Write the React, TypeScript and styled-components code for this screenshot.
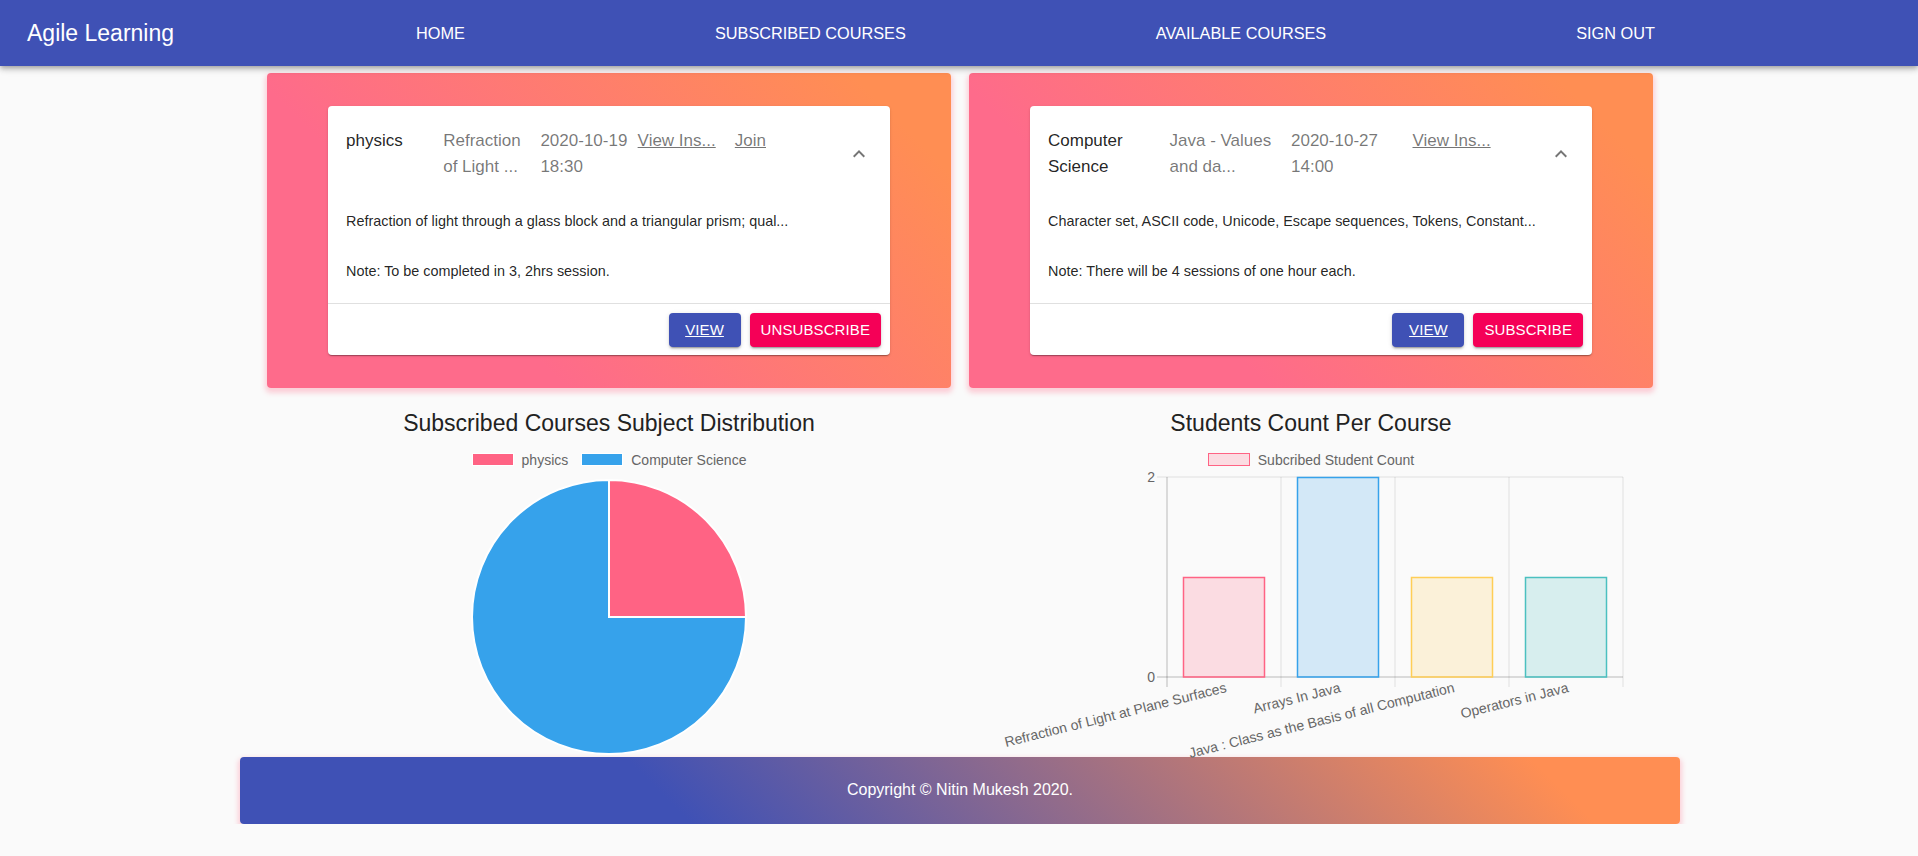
import React from "react";
import styled, { createGlobalStyle } from "styled-components";

const GlobalStyle = createGlobalStyle`
  html, body {
    margin: 0;
    padding: 0;
    background: #fafafa;
    font-family: "Liberation Sans", Arial, Helvetica, sans-serif;
  }
  * {
    box-sizing: border-box;
  }
`;

const AppBar = styled.header`
  height: 66px;
  background: #3f51b5;
  color: #fff;
  display: flex;
  align-items: center;
  padding: 0 27px;
  box-shadow:
    0px 2px 4px -1px rgba(0, 0, 0, 0.2),
    0px 4px 5px 0px rgba(0, 0, 0, 0.14),
    0px 1px 10px 0px rgba(0, 0, 0, 0.12);
  position: relative;
  z-index: 2;
`;

const Brand = styled.div`
  font-size: 23px;
  line-height: 1;
  white-space: nowrap;
`;

const Nav = styled.nav`
  display: flex;
  align-items: center;
  gap: 250px;
  margin-left: 242px;
`;

const NavLink = styled.a`
  color: #fff;
  font-size: 16.3px;
  text-transform: uppercase;
  text-decoration: none;
  white-space: nowrap;
  cursor: pointer;
`;

const Main = styled.main`
  width: 1386px;
  margin: 7px 0 0 calc(50% - 692px);
`;

const CardRow = styled.div`
  display: grid;
  grid-template-columns: 684px 684px;
  gap: 18px;
`;

const GradientPanel = styled.section`
  background: linear-gradient(45deg, #fe6b8b 30%, #ff8e53 90%);
  border-radius: 4px;
  box-shadow: 0 3px 5px 2px rgba(255, 105, 135, 0.3);
  padding: 33px 61px;
`;

const CourseCard = styled.div`
  background: #fff;
  border-radius: 4px;
  box-shadow:
    0px 2px 1px -1px rgba(0, 0, 0, 0.2),
    0px 1px 1px 0px rgba(0, 0, 0, 0.14),
    0px 1px 3px 0px rgba(0, 0, 0, 0.12);
`;

const Summary = styled.div`
  display: flex;
  align-items: center;
  padding: 22px 19px 0 18px;
`;

const SummaryCols = styled.div`
  flex: 1;
  display: flex;
  min-width: 0;
`;

const SummaryCol = styled.div<{ $primary?: boolean }>`
  flex: 1 1 0;
  min-width: 0;
  padding-right: 8px;
  font-size: 17px;
  line-height: 25.5px;
  color: ${(p) => (p.$primary ? "rgba(0, 0, 0, 0.87)" : "rgba(0, 0, 0, 0.54)")};
`;

const SummaryLink = styled.a`
  color: rgba(0, 0, 0, 0.54);
  text-decoration: underline;
  cursor: pointer;
`;

const ExpandIcon = styled.svg`
  width: 24px;
  height: 24px;
  margin-left: 15px;
  flex: none;
  fill: rgba(0, 0, 0, 0.54);
`;

const Details = styled.div`
  padding: 32px 18px 21px;
  color: rgba(0, 0, 0, 0.87);
  font-size: 14.4px;
  line-height: 20.6px;
`;

const DetailLine = styled.p`
  margin: 0;
  & + & {
    margin-top: 29.4px;
  }
`;

const Divider = styled.hr`
  margin: 0;
  border: none;
  height: 1px;
  background: rgba(0, 0, 0, 0.12);
`;

const Actions = styled.div`
  display: flex;
  justify-content: flex-end;
  gap: 9px;
  padding: 9px 9px 8px;
`;

const ActionButton = styled.button<{ $variant: "primary" | "secondary" }>`
  height: 34px;
  min-width: 72px;
  padding: 0 11px;
  border: none;
  border-radius: 4px;
  font-family: inherit;
  font-size: 15px;
  letter-spacing: 0.1px;
  text-transform: uppercase;
  color: #fff;
  cursor: pointer;
  background: ${(p) => (p.$variant === "primary" ? "#3f51b5" : "#f50057")};
  text-decoration: ${(p) => (p.$variant === "primary" ? "underline" : "none")};
  box-shadow:
    0px 3px 1px -2px rgba(0, 0, 0, 0.2),
    0px 2px 2px 0px rgba(0, 0, 0, 0.14),
    0px 1px 5px 0px rgba(0, 0, 0, 0.12);
`;

const ChartRow = styled.div`
  display: grid;
  grid-template-columns: 684px 684px;
  gap: 18px;
  padding-top: 21px;
`;

const ChartColumn = styled.div`
  display: flex;
  flex-direction: column;
  align-items: center;
`;

const ChartTitle = styled.h2`
  margin: 0;
  font-size: 23px;
  line-height: 28px;
  font-weight: 400;
  color: #222;
`;

const Legend = styled.div`
  display: flex;
  align-items: center;
  gap: 13px;
  height: 16px;
  margin-top: 15px;
`;

const LegendItem = styled.div`
  display: flex;
  align-items: center;
  gap: 8px;
  font-size: 14px;
  color: #666;
  white-space: nowrap;
`;

const LegendSwatch = styled.span<{ $fill: string; $stroke: string }>`
  width: 42px;
  height: 13px;
  background: ${(p) => p.$fill};
  border: 1.5px solid ${(p) => p.$stroke};
`;

const ChartSvg = styled.svg`
  display: block;
  margin-top: 2px;
  overflow: visible;
  font-family: "Liberation Sans", Arial, sans-serif;
`;

const Footer = styled.footer`
  width: 1440px;
  height: 67px;
  margin-left: calc(50% - 719px);
  display: flex;
  align-items: center;
  justify-content: center;
  color: #fff;
  font-size: 16px;
  border-radius: 4px;
  background: linear-gradient(45deg, #3f51b5 30%, #ff8e53 90%);
  box-shadow: 0 3px 5px 2px rgba(255, 105, 135, 0.3);
`;

type Course = {
  subject: string;
  topic: string;
  date: string;
  links: string[];
  description: string;
  note: string;
  action: string;
};

const courses: Course[] = [
  {
    subject: "physics",
    topic: "Refraction of Light ...",
    date: "2020-10-19 18:30",
    links: ["View Ins...", "Join"],
    description:
      "Refraction of light through a glass block and a triangular prism; qual...",
    note: "Note: To be completed in 3, 2hrs session.",
    action: "Unsubscribe",
  },
  {
    subject: "Computer Science",
    topic: "Java - Values and da...",
    date: "2020-10-27 14:00",
    links: ["View Ins..."],
    description:
      "Character set, ASCII code, Unicode, Escape sequences, Tokens, Constant...",
    note: "Note: There will be 4 sessions of one hour each.",
    action: "Subscribe",
  },
];

const bars = [
  { label: "Refraction of Light at Plane Surfaces", value: 1, rgb: "255, 99, 132" },
  { label: "Arrays In Java", value: 2, rgb: "54, 162, 235" },
  { label: "Java : Class as the Basis of all Computation", value: 1, rgb: "255, 206, 86" },
  { label: "Operators in Java", value: 1, rgb: "75, 192, 192" },
];

const CourseItem: React.FC<{ course: Course }> = ({ course }) => (
  <GradientPanel>
    <CourseCard>
      <Summary>
        <SummaryCols>
          <SummaryCol $primary>{course.subject}</SummaryCol>
          <SummaryCol>{course.topic}</SummaryCol>
          <SummaryCol>{course.date}</SummaryCol>
          {course.links.map((l) => (
            <SummaryCol key={l}>
              <SummaryLink>{l}</SummaryLink>
            </SummaryCol>
          ))}
        </SummaryCols>
        <ExpandIcon viewBox="0 0 24 24">
          <path d="M12 8l-6 6 1.41 1.41L12 10.83l4.59 4.58L18 14z" />
        </ExpandIcon>
      </Summary>
      <Details>
        <DetailLine>{course.description}</DetailLine>
        <DetailLine>{course.note}</DetailLine>
      </Details>
      <Divider />
      <Actions>
        <ActionButton $variant="primary">View</ActionButton>
        <ActionButton $variant="secondary">{course.action}</ActionButton>
      </Actions>
    </CourseCard>
  </GradientPanel>
);

const PieChart: React.FC = () => {
  const cx = 342;
  const cy = 147;
  const r = 137;
  return (
    <ChartSvg width={684} height={287} viewBox="0 0 684 287">
      <path
        d={`M${cx} ${cy} L${cx + r} ${cy} A${r} ${r} 0 1 1 ${cx} ${cy - r} Z`}
        fill="#36a2eb"
        stroke="#fff"
        strokeWidth={2}
      />
      <path
        d={`M${cx} ${cy} L${cx} ${cy - r} A${r} ${r} 0 0 1 ${cx + r} ${cy} Z`}
        fill="#ff6384"
        stroke="#fff"
        strokeWidth={2}
      />
    </ChartSvg>
  );
};

const BarChart: React.FC = () => {
  const x0 = 198;
  const step = 114;
  const top = 7;
  const zero = 207;
  const unit = (zero - top) / 2;
  const grid = "rgba(0, 0, 0, 0.1)";
  const axis = "rgba(0, 0, 0, 0.25)";
  return (
    <ChartSvg width={684} height={287} viewBox="0 0 684 287">
      <line x1={x0 - 10} y1={top} x2={x0 + step * 4} y2={top} stroke={grid} />
      {[1, 2, 3, 4].map((i) => (
        <line
          key={i}
          x1={x0 + step * i}
          y1={top}
          x2={x0 + step * i}
          y2={zero + 10}
          stroke={grid}
        />
      ))}
      <line x1={x0} y1={top} x2={x0} y2={zero + 10} stroke={axis} />
      <line x1={x0 - 10} y1={zero} x2={x0 + step * 4} y2={zero} stroke={axis} />
      <text x={x0 - 12} y={top} fontSize={14} fill="#666" textAnchor="end" dominantBaseline="central">
        2
      </text>
      <text x={x0 - 12} y={zero} fontSize={14} fill="#666" textAnchor="end" dominantBaseline="central">
        0
      </text>
      {bars.map((b, i) => {
        const bx = x0 + step * i + 16;
        const h = b.value * unit;
        return (
          <rect
            key={b.label}
            x={bx + 0.5}
            y={zero - h + 0.5}
            width={81}
            height={h - 0.5}
            fill={`rgba(${b.rgb}, 0.2)`}
            stroke={`rgb(${b.rgb})`}
            strokeWidth={1.5}
          />
        );
      })}
      {bars.map((b, i) => {
        const tx = x0 + step * i + step / 2 + 2;
        const ty = zero + 10;
        return (
          <text
            key={b.label}
            x={tx}
            y={ty}
            fontSize={14}
            fill="#666"
            textAnchor="end"
            dominantBaseline="central"
            transform={`rotate(-14 ${tx} ${ty})`}
          >
            {b.label}
          </text>
        );
      })}
    </ChartSvg>
  );
};

export default function App() {
  return (
    <>
      <GlobalStyle />
      <AppBar>
        <Brand>Agile Learning</Brand>
        <Nav>
          <NavLink>Home</NavLink>
          <NavLink>Subscribed Courses</NavLink>
          <NavLink>Available Courses</NavLink>
          <NavLink>Sign Out</NavLink>
        </Nav>
      </AppBar>
      <Main>
        <CardRow>
          {courses.map((c) => (
            <CourseItem key={c.subject} course={c} />
          ))}
        </CardRow>
        <ChartRow>
          <ChartColumn>
            <ChartTitle>Subscribed Courses Subject Distribution</ChartTitle>
            <Legend>
              <LegendItem>
                <LegendSwatch $fill="#ff6384" $stroke="#fff" />
                physics
              </LegendItem>
              <LegendItem>
                <LegendSwatch $fill="#36a2eb" $stroke="#fff" />
                Computer Science
              </LegendItem>
            </Legend>
            <PieChart />
          </ChartColumn>
          <ChartColumn>
            <ChartTitle>Students Count Per Course</ChartTitle>
            <Legend>
              <LegendItem>
                <LegendSwatch $fill="rgba(255, 99, 132, 0.2)" $stroke="rgb(255, 99, 132)" />
                Subcribed Student Count
              </LegendItem>
            </Legend>
            <BarChart />
          </ChartColumn>
        </ChartRow>
      </Main>
      <Footer>Copyright © Nitin Mukesh 2020.</Footer>
    </>
  );
}
